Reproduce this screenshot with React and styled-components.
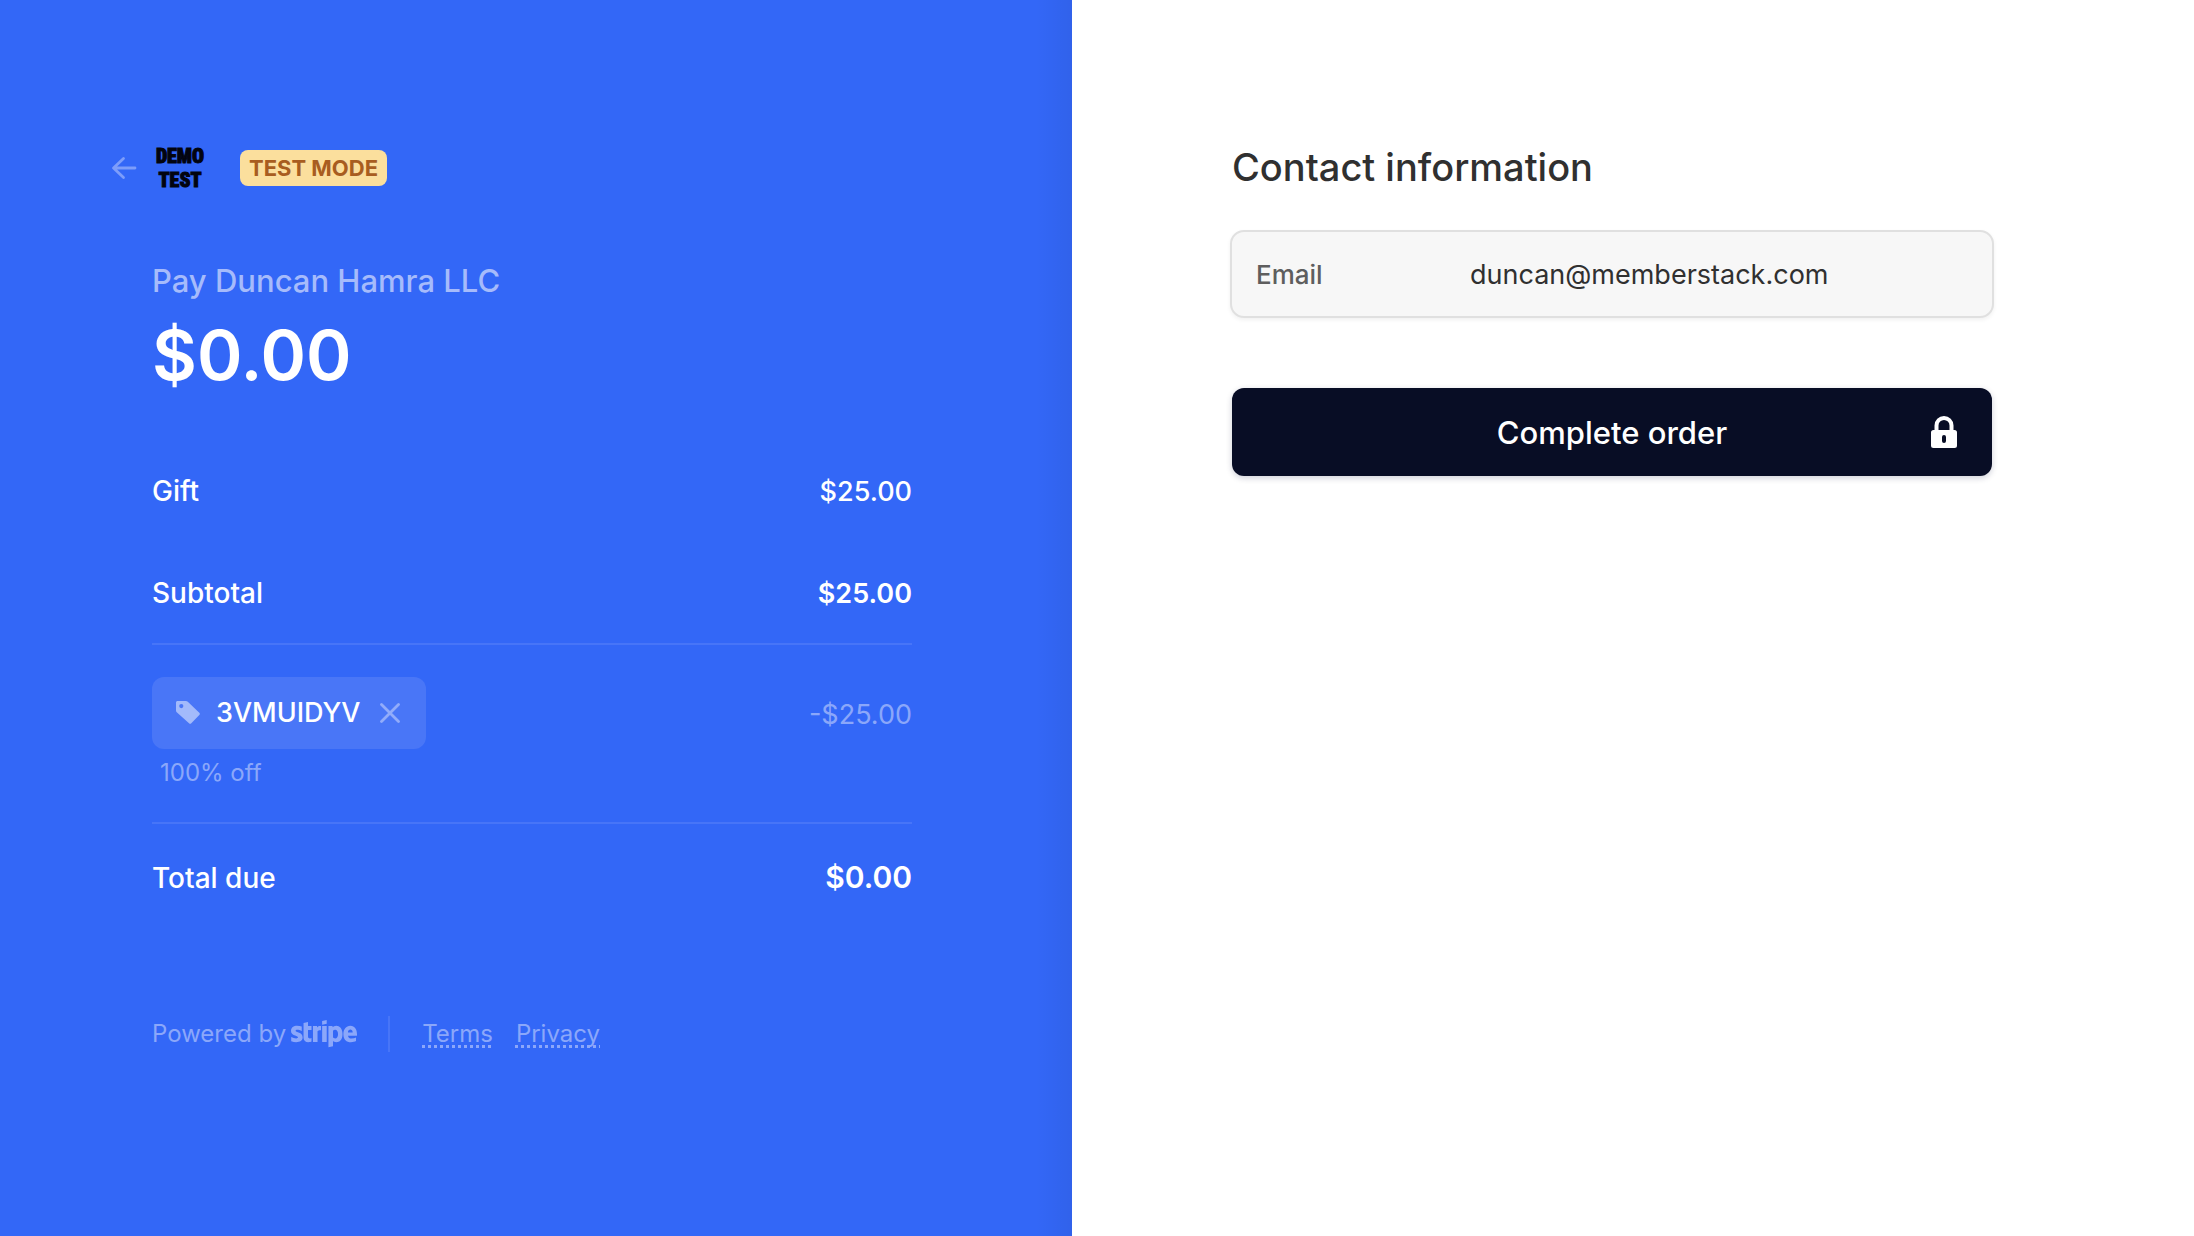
import React from "react";
import styled, { createGlobalStyle } from "styled-components";
import { FaStripe } from "react-icons/fa";

export default function App() {
  return (
    <>
      <GlobalStyle />
      <Checkout>
        <Summary />
        <Payment />
      </Checkout>
    </>
  );
}

function Summary() {
  return (
    <SummaryPane>
      <SummaryBody>
        <Header>
          <BackLink href="#back" aria-label="Back">
            <ArrowIcon />
          </BackLink>
          <Logo>
            DEMO
            <br />
            TEST
          </Logo>
          <Badge>TEST MODE</Badge>
        </Header>
        <Payee>Pay Duncan Hamra LLC</Payee>
        <Amount>$0.00</Amount>

        <ItemRow>
          <Label>Gift</Label>
          <Price>$25.00</Price>
        </ItemRow>
        <SubtotalRow>
          <Label>Subtotal</Label>
          <Price $weight={600}>$25.00</Price>
        </SubtotalRow>
        <DiscountRow>
          <div>
            <Coupon>
              <TagIcon />
              <span>3VMUIDYV</span>
              <RemoveBtn type="button" aria-label="Remove promotion code">
                <CloseIcon />
              </RemoveBtn>
            </Coupon>
            <CouponNote>100% off</CouponNote>
          </div>
          <Discount>-$25.00</Discount>
        </DiscountRow>
        <TotalRow>
          <Label>Total due</Label>
          <Total>$0.00</Total>
        </TotalRow>

        <Footer>
          <PoweredBy href="#stripe">
            Powered by
            <StripeLogo viewBox="0 120 640 280" aria-label="stripe" />
          </PoweredBy>
          <FooterLinks>
            <FooterLink href="#terms">Terms</FooterLink>
            <FooterLink href="#privacy">Privacy</FooterLink>
          </FooterLinks>
        </Footer>
      </SummaryBody>
    </SummaryPane>
  );
}

function Payment() {
  return (
    <PaymentPane>
      <Form onSubmit={(e) => e.preventDefault()}>
        <Title>Contact information</Title>
        <Field>
          <FieldLabel htmlFor="email">Email</FieldLabel>
          <FieldInput
            id="email"
            type="email"
            defaultValue="duncan@memberstack.com"
            readOnly
          />
        </Field>
        <SubmitBtn type="submit">
          <span>Complete order</span>
          <LockIcon />
        </SubmitBtn>
      </Form>
    </PaymentPane>
  );
}

const ArrowIcon = () => (
  <svg width="26" height="24" viewBox="0 0 26 24" fill="none">
    <path
      d="M12.500 2.500L2.500 12l10 9.500M3 12h21"
      stroke="currentColor"
      strokeWidth="2.800"
      strokeLinecap="round"
      strokeLinejoin="round"
    />
  </svg>
);

const TagIcon = () => (
  <svg width="26" height="26" viewBox="0 0 26 26" fill="#a3bafb">
    <path
      fillRule="evenodd"
      d="M2.500 1h8.300c.8 0 1.500.3 2 .8l11.500 11c.7.700.7 1.600 0 2.300l-8 8.200c-.7.700-1.600.7-2.300 0L2 12.500c-.6-.6-1-1.300-1-2.100V2.500C1 1.700 1.700 1 2.500 1zm3.800 3a2.100 2.100 0 1 0 0 4.200 2.100 2.100 0 0 0 0-4.200z"
    />
  </svg>
);

const CloseIcon = () => (
  <svg width="20" height="20" viewBox="0 0 20 20" fill="none">
    <path
      d="M1.500 1.500l17 17M18.500 1.500l-17 17"
      stroke="currentColor"
      strokeWidth="2.800"
      strokeLinecap="round"
    />
  </svg>
);

const LockIcon = () => (
  <svg width="26" height="32" viewBox="0 0 26 32" fill="none">
    <path
      d="M5.500 15V9.500a7.500 7.500 0 0 1 15 0V15"
      stroke="currentColor"
      strokeWidth="4"
    />
    <path
      fill="currentColor"
      fillRule="evenodd"
      d="M2.500 14h21A2.500 2.500 0 0 1 26 16.500v13a2.500 2.500 0 0 1-2.500 2.500h-21A2.500 2.500 0 0 1 0 29.500v-13A2.500 2.500 0 0 1 2.500 14zM13 19a2 2 0 0 0-2 2v4a2 2 0 0 0 4 0v-4a2 2 0 0 0-2-2z"
    />
  </svg>
);

const GlobalStyle = createGlobalStyle`
  * {
    box-sizing: border-box;
  }
  body {
    margin: 0;
    background-color: #ffffff;
    font-family: Inter, "Liberation Sans", sans-serif;
    -webkit-font-smoothing: antialiased;
  }
  button,
  input {
    font-family: inherit;
  }
`;

const Checkout = styled.main`
  display: grid;
  grid-template-columns: 1072fr 1122fr;
  min-height: 100vh;
`;

const SummaryPane = styled.section`
  display: flex;
  justify-content: flex-end;
  padding: 140px 160px 60px 60px;
  background: linear-gradient(to left, rgba(0, 0, 0, 0.05), transparent 36px)
    #3367f7;
  color: white;
`;

const SummaryBody = styled.div`
  width: 100%;
  max-width: 760px;
`;

const Header = styled.header`
  display: flex;
  align-items: center;
  height: 56px;
  margin-left: -41px;
`;

const BackLink = styled.a`
  display: flex;
  color: #7d9dfa;
`;

const Logo = styled.div`
  width: 56px;
  margin: 0 32px 0 15px;
  font-family: "Roboto Condensed", "Liberation Sans Narrow", Inter, sans-serif;
  font-size: 20px;
  font-weight: 900;
  line-height: 24px;
  text-align: center;
  color: #02040f;
  -webkit-text-stroke: 1px #02040f;
`;

const Badge = styled.span`
  padding: 0 9px;
  border-radius: 8px;
  background-color: #fbdf9d;
  font-size: 22px;
  font-weight: 700;
  line-height: 36px;
  color: #a85d20;
`;

const Payee = styled.h1`
  margin: 60px 0 0;
  font-size: 31px;
  font-weight: 500;
  line-height: 50px;
  color: #a6bbfb;
`;

const Amount = styled.p`
  margin: 0 0 67px;
  font-size: 69px;
  font-weight: 600;
  line-height: 98px;
`;

const Row = styled.div`
  display: flex;
  justify-content: space-between;
  align-items: baseline;
  font-size: 27px;
  line-height: 40px;
`;

const ItemRow = styled(Row)`
  margin-bottom: 61px;
`;

const SubtotalRow = styled(Row)`
  padding-bottom: 29px;
  border-bottom: 2px solid #4775f8;
`;

const DiscountRow = styled(Row)`
  align-items: flex-start;
  padding: 32px 0 33px;
  border-bottom: 2px solid #4775f8;
`;

const TotalRow = styled(Row)`
  padding-top: 33px;
`;

const Label = styled.span`
  font-size: 28px;
  font-weight: 500;
`;

const Price = styled.span`
  font-weight: ${({ $weight }) => $weight || 500};
`;

const Discount = styled.span`
  line-height: 76px;
  color: #8ba7fa;
`;

const Total = styled.span`
  font-size: 30px;
  font-weight: 600;
`;

const Coupon = styled.div`
  display: flex;
  align-items: center;
  gap: 15px;
  height: 72px;
  padding: 0 26px 0 23px;
  border-radius: 12px;
  background-color: #4976f7;
  font-weight: 500;
`;

const RemoveBtn = styled.button`
  display: flex;
  margin-left: 4px;
  padding: 0;
  border: none;
  background: none;
  color: #92acfa;
  cursor: pointer;
`;

const CouponNote = styled.div`
  margin-top: 8px;
  padding-left: 8px;
  font-size: 24px;
  line-height: 32px;
  color: #8ba7fa;
`;

const Footer = styled.footer`
  display: flex;
  margin-top: 118px;
  font-size: 24px;
  line-height: 36px;
  color: #8ba7fa;
`;

const PoweredBy = styled.a`
  display: flex;
  align-items: center;
  gap: 5px;
  padding-right: 31px;
  border-right: 2px solid #4775f8;
  color: inherit;
  text-decoration: none;
`;

const StripeLogo = styled(FaStripe)`
  width: 66px;
  height: 30px;
`;

const FooterLinks = styled.nav`
  display: flex;
  gap: 23px;
  padding-left: 32px;
`;

const FooterLink = styled.a`
  color: inherit;
  text-decoration: underline dotted 3px;
  text-underline-offset: 3px;
  text-decoration-skip-ink: none;
`;

const PaymentPane = styled.section`
  padding: 140px 60px 60px 160px;
`;

const Form = styled.form`
  max-width: 760px;
`;

const Title = styled.h2`
  margin: 0 0 36px;
  font-size: 38px;
  font-weight: 500;
  line-height: 54px;
  color: #303030;
`;

const Field = styled.div`
  display: flex;
  align-items: center;
  height: 88px;
  margin: 0 -2px 70px;
  padding: 0 24px;
  border: 2px solid #e0e0e0;
  border-radius: 14px;
  background-color: #f7f7f7;
  box-shadow: 0 2px 4px rgba(0, 0, 0, 0.06);
`;

const FieldLabel = styled.label`
  width: 214px;
  font-size: 26px;
  font-weight: 500;
  color: #5e5e5e;
`;

const FieldInput = styled.input`
  flex: 1;
  min-width: 0;
  padding: 0;
  border: none;
  outline: none;
  background: none;
  font-size: 27px;
  color: #303030;
`;

const SubmitBtn = styled.button`
  display: grid;
  grid-template-columns: 1fr auto 1fr;
  align-items: center;
  width: 100%;
  height: 88px;
  padding: 0 35px;
  border: none;
  border-radius: 12px;
  background-color: #080d25;
  box-shadow: 0 2px 6px rgba(8, 13, 60, 0.2);
  font-size: 31px;
  font-weight: 500;
  color: white;
  cursor: pointer;

  span {
    grid-column: 2;
  }
  svg {
    justify-self: end;
  }
`;
